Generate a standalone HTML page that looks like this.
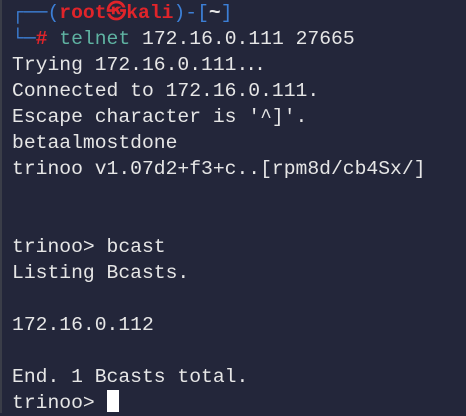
<!DOCTYPE html>
<html><head><style>
html,body{margin:0;padding:0;}
body{width:466px;height:413px;background:#23263a;overflow:hidden;position:relative;border-left:2px solid #3a3d48;box-sizing:border-box;}
pre{margin:0;position:absolute;left:10px;top:0px;font-family:"Liberation Mono",monospace;font-size:19.7px;line-height:26px;color:#e6e6e6;}
.b{color:#3c7fd6}.r{color:#e0242a;font-weight:bold}.g{color:#5fb3a2}
.d{letter-spacing:-3px}
.cur{display:inline-block;width:12px;height:22px;background:#fff;vertical-align:-4px;}
</style></head><body>
<pre><span class="b">┌──(</span><span class="r">root㉿kali</span><span class="b">)-[</span><b>~</b><span class="b">]</span>
<span class="b">└─</span><span class="r">#</span> <span class="g">telnet</span> 172.16.0.111 27665
Trying 172.16.0.111<span class="d">...</span>
Connected to 172.16.0.111.
Escape character is '^]'.
betaalmostdone
trinoo v1.07d2+f3+c..[rpm8d/cb4Sx/]


trinoo&gt; bcast
Listing Bcasts.

172.16.0.112

End. 1 Bcasts total.
trinoo&gt; <span class="cur"></span></pre>
</body></html>
